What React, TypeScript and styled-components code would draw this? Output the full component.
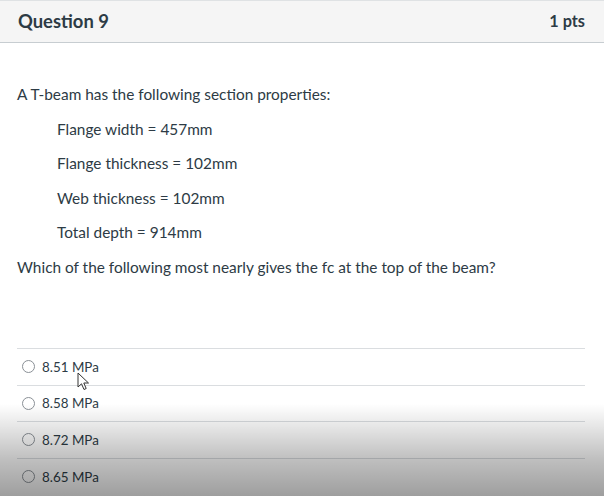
import React from "react";
import styled, { createGlobalStyle } from "styled-components";

const GlobalStyle = createGlobalStyle`
  html, body { margin: 0; padding: 0; background: #fff; }
  body { font-family: Lato, "Noto Sans", sans-serif; color: #2d3b45; }
  * { box-sizing: border-box; }
`;

const Page = styled.div`
  position: relative;
  width: 604px;
  height: 496px;
  overflow: hidden;
`;

const Header = styled.div`
  height: 43px;
  background: #f5f5f5;
  border-top: 1px solid #dfe2e4;
  border-bottom: 1px solid #c7cdd1;
  display: flex;
  align-items: center;
  justify-content: space-between;
  padding: 0 19px 2px 18px;
`;

const Title = styled.h2`
  margin: 0;
  font-size: 18.4px;
  font-weight: 700;
  color: #2d3b45;
`;

const Points = styled.span`
  font-size: 16.3px;
  font-weight: 700;
  color: #2d3b45;
`;

const Body = styled.div`
  padding: 41px 18px 0 17px;
`;

const Para = styled.p<{ $indent?: boolean }>`
  margin: 0 0 14.6px;
  padding-left: ${(p) => (p.$indent ? "40px" : "0")};
  font-size: 15.4px;
  line-height: 20px;
`;

const Answers = styled.ul`
  list-style: none;
  margin: 0;
  padding: 0;
  margin-top: 71px;
  width: 568px;
`;

const Answer = styled.li`
  height: 36.6px;
  border-top: 1px solid #dadde0;
  display: flex;
  align-items: center;
  padding-left: 5px;
  gap: 7px;
  font-size: 13.4px;
`;

const Radio = styled.span`
  width: 13px;
  height: 13px;
  border-radius: 50%;
  border: 1px solid #8a9096;
  background: #fff;
`;

const Shade = styled.div`
  position: absolute;
  left: 0;
  right: 0;
  bottom: 0;
  height: 92px;
  pointer-events: none;
  background: linear-gradient(
    to bottom,
    rgba(0, 0, 0, 0) 0%,
    rgba(0, 0, 0, 0.1) 25%,
    rgba(0, 0, 0, 0.25) 60%,
    rgba(0, 0, 0, 0.38) 100%
  );
`;

const Cursor = styled.svg`
  position: absolute;
  left: 77px;
  top: 372px;
  pointer-events: none;
`;

const answers = ["8.51 MPa", "8.58 MPa", "8.72 MPa", "8.65 MPa"];

export default function App() {
  return (
    <Page>
      <GlobalStyle />
      <Header>
        <Title>Question 9</Title>
        <Points>1 pts</Points>
      </Header>
      <Body>
        <Para>A T-beam has the following section properties:</Para>
        <Para $indent>Flange width = 457mm</Para>
        <Para $indent>Flange thickness = 102mm</Para>
        <Para $indent>Web thickness = 102mm</Para>
        <Para $indent>Total depth = 914mm</Para>
        <Para>Which of the following most nearly gives the fc at the top of the beam?</Para>
        <Answers>
          {answers.map((a) => (
            <Answer key={a}>
              <Radio />
              <span>{a}</span>
            </Answer>
          ))}
        </Answers>
      </Body>
      <Shade />
      <Cursor width="14" height="20" viewBox="0 0 14 20">
        <path
          d="M1 1 L1 15 L4.5 11.8 L7 17.5 L9.2 16.5 L6.8 11 L11.5 11 Z"
          fill="#fff"
          stroke="#333"
          strokeWidth="1"
          strokeLinejoin="round"
        />
      </Cursor>
    </Page>
  );
}
